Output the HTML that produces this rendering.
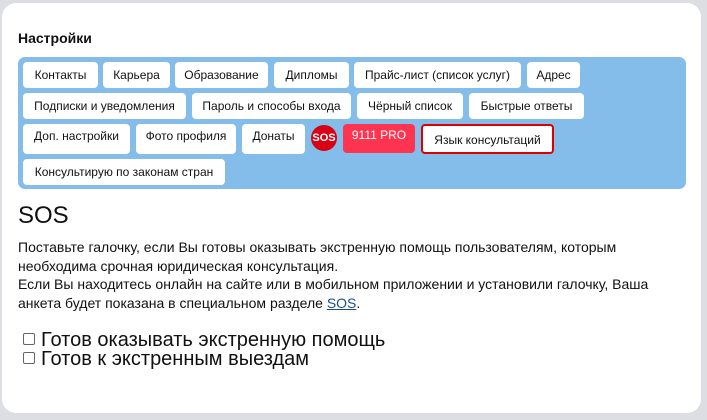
<!DOCTYPE html>
<html><head><meta charset="utf-8"><style>
*{margin:0;padding:0;box-sizing:border-box}
body{width:707px;height:420px;background:#dcdee3;font-family:"Liberation Sans",sans-serif;position:relative;overflow:hidden;color:#111}
.card{position:absolute;left:2px;top:3px;width:699px;height:410px;background:#fff;border-radius:14px}
.t{position:absolute;left:18px;top:30px;font-size:14px;font-weight:bold}
.blue{position:absolute;left:18px;top:57px;width:668px;height:132px;background:#85bdea;border-radius:7px}
.b{position:absolute;height:26px;background:#fff;border-radius:4px;font-size:12px;line-height:26px;text-align:center;white-space:nowrap}
.sos{position:absolute;left:311px;top:125px;width:26px;height:26px;border-radius:50%;background:#d80012;color:#fff;font-weight:bold;font-size:11px;line-height:26px;text-align:center}
h2{position:absolute;left:18px;top:202px;font-size:24px;font-weight:normal}
p{position:absolute;left:18px;top:238px;font-size:14px;line-height:18.5px;width:650px}
a{color:#1a4e8a}
.c{position:absolute;left:23px;font-size:20px;line-height:20px}
.c span{display:inline-block;width:12px;height:12px;border:1px solid #666;border-radius:2px;margin-right:6px;vertical-align:1px}
</style></head><body>
<div class="card"></div>
<div class="t">Настройки</div>
<div class="blue"></div>
<div class="b" style="left:23px;top:62px;width:75px">Контакты</div>
<div class="b" style="left:103px;top:62px;width:67px">Карьера</div>
<div class="b" style="left:175px;top:62px;width:93px">Образование</div>
<div class="b" style="left:274px;top:62px;width:75px">Дипломы</div>
<div class="b" style="left:354px;top:62px;width:167px">Прайс-лист (список услуг)</div>
<div class="b" style="left:527px;top:62px;width:53px">Адрес</div>
<div class="b" style="left:23px;top:93px;width:163px">Подписки и уведомления</div>
<div class="b" style="left:192px;top:93px;width:159px">Пароль и способы входа</div>
<div class="b" style="left:357px;top:93px;width:106px">Чёрный список</div>
<div class="b" style="left:469px;top:93px;width:115px">Быстрые ответы</div>
<div class="b" style="left:23px;top:124px;width:107px;height:30px;line-height:24px">Доп. настройки</div>
<div class="b" style="left:136px;top:124px;width:100px;height:30px;line-height:24px">Фото профиля</div>
<div class="b" style="left:242px;top:124px;width:63px;height:30px;line-height:24px">Донаты</div>
<div class="sos">SOS</div>
<div class="b" style="left:343px;top:124px;width:72px;height:29px;line-height:22px;background:#ff3450;color:#fff">9111 PRO</div>
<div class="b" style="left:421px;top:124px;width:133px;height:30px;line-height:28px;border:2px solid #d00">Язык консультаций</div>
<div class="b" style="left:23px;top:159px;width:202px">Консультирую по законам стран</div>
<h2>SOS</h2>
<p>Поставьте галочку, если Вы готовы оказывать экстренную помощь пользователям, которым необходима срочная юридическая консультация.<br>Если Вы находитесь онлайн на сайте или в мобильном приложении и установили галочку, Ваша анкета будет показана в специальном разделе <a href="#">SOS</a>.</p>
<div class="c" style="top:330px"><span></span>Готов оказывать экстренную помощь</div>
<div class="c" style="top:349px"><span></span>Готов к экстренным выездам</div>
</body></html>
